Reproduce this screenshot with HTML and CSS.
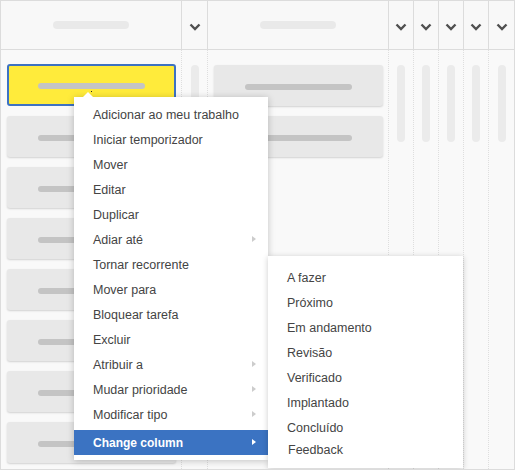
FILE: index.html
```html
<!DOCTYPE html>
<html>
<head>
<meta charset="utf-8">
<link rel="stylesheet" href="styles.css">
</head>
<body>
<div class="board">
  <div class="col">
    <div class="head"><span class="hbar"></span></div>
    <div class="body cards first">
      <div class="card active"><span class="bar"></span></div>
      <div class="card"><span class="bar"></span></div>
      <div class="card"><span class="bar"></span></div>
      <div class="card"><span class="bar"></span></div>
      <div class="card"><span class="bar"></span></div>
      <div class="card"><span class="bar"></span></div>
      <div class="card"><span class="bar"></span></div>
      <div class="card"><span class="bar"></span></div>
    </div>
  </div>
  <div class="col">
    <div class="head narrow"><svg class="chev" viewBox="0 0 12 8" width="12" height="8"><polyline points="1.5,1.5 6,6 10.5,1.5"/></svg></div>
    <div class="body lane"><span class="pill"></span></div>
  </div>
  <div class="col">
    <div class="head"><span class="hbar"></span></div>
    <div class="body cards third">
      <div class="card"><span class="bar"></span></div>
      <div class="card"><span class="bar"></span></div>
    </div>
  </div>
  <div class="col">
    <div class="head narrow"><svg class="chev" viewBox="0 0 12 8" width="12" height="8"><polyline points="1.5,1.5 6,6 10.5,1.5"/></svg></div>
    <div class="body lane"><span class="pill"></span></div>
  </div>
  <div class="col">
    <div class="head narrow"><svg class="chev" viewBox="0 0 12 8" width="12" height="8"><polyline points="1.5,1.5 6,6 10.5,1.5"/></svg></div>
    <div class="body lane"><span class="pill"></span></div>
  </div>
  <div class="col">
    <div class="head narrow"><svg class="chev" viewBox="0 0 12 8" width="12" height="8"><polyline points="1.5,1.5 6,6 10.5,1.5"/></svg></div>
    <div class="body lane"><span class="pill"></span></div>
  </div>
  <div class="col">
    <div class="head narrow"><svg class="chev" viewBox="0 0 12 8" width="12" height="8"><polyline points="1.5,1.5 6,6 10.5,1.5"/></svg></div>
    <div class="body lane"><span class="pill"></span></div>
  </div>
  <div class="col last">
    <div class="head narrow"><svg class="chev" viewBox="0 0 12 8" width="12" height="8"><polyline points="1.5,1.5 6,6 10.5,1.5"/></svg></div>
    <div class="body lane"><span class="pill"></span></div>
  </div>

  <span class="cursor-dot"></span>

  <ul class="menu">
    <li class="item">Adicionar ao meu trabalho</li>
    <li class="item">Iniciar temporizador</li>
    <li class="item">Mover</li>
    <li class="item">Editar</li>
    <li class="item">Duplicar</li>
    <li class="item sub">Adiar até</li>
    <li class="item">Tornar recorrente</li>
    <li class="item">Mover para</li>
    <li class="item">Bloquear tarefa</li>
    <li class="item">Excluir</li>
    <li class="item sub">Atribuir a</li>
    <li class="item sub">Mudar prioridade</li>
    <li class="item sub">Modificar tipo</li>
    <li class="item sub selected">Change column</li>
  </ul>

  <ul class="submenu">
    <li class="item">A fazer</li>
    <li class="item">Próximo</li>
    <li class="item">Em andamento</li>
    <li class="item">Revisão</li>
    <li class="item">Verificado</li>
    <li class="item">Implantado</li>
    <li class="item">Concluído</li>
    <li class="item feedback">Feedback</li>
  </ul>
</div>
</body>
</html>
```

FILE: styles.css
```css
html, body {
  margin: 0;
  padding: 0;
  background: #ffffff;
}

.board {
  position: relative;
  width: 515px;
  height: 470px;
  box-sizing: border-box;
  border: 1px solid #dcdcdc;
  background: #f9f9f9;
  display: grid;
  grid-template-columns: 181px 26px 181px 25px 25px 25px 25px 25px;
  overflow: hidden;
  font-family: "Liberation Sans", Arial, sans-serif;
}

.col {
  display: flex;
  flex-direction: column;
  min-height: 0;
}

.head {
  height: 49px;
  flex: none;
  box-sizing: border-box;
  border-right: 1px solid #dcdcdc;
  border-bottom: 1px solid #dcdcdc;
  background: #f8f8f8;
  display: flex;
  align-items: center;
  justify-content: center;
}

.head.narrow {
  padding-top: 3px;
}

.last .head {
  border-right: none;
}

.hbar {
  width: 76px;
  height: 8px;
  border-radius: 4px;
  background: #e9e9e9;
  margin-top: -1px;
}

.chev polyline {
  fill: none;
  stroke: #505050;
  stroke-width: 2.4;
  stroke-linecap: butt;
  stroke-linejoin: miter;
}

.body {
  flex: 1;
  box-sizing: border-box;
  border-right: 1px dotted #dedede;
  background: #f9f9f9;
}

.last .body {
  border-right: none;
}

.cards {
  display: flex;
  flex-direction: column;
  gap: 10px;
  padding: 14px 5px 0 6px;
}

.cards.third {
  padding-top: 15px;
}

.card {
  height: 41px;
  flex: none;
  box-sizing: border-box;
  background: #e8e8e8;
  border-radius: 3px;
  box-shadow: 0 1px 2px rgba(0, 0, 0, 0.16);
  display: flex;
  align-items: center;
  justify-content: center;
  padding-top: 3px;
}

.card.active {
  height: 42px;
  background: #ffeb3b;
  border: 2px solid #3d72c2;
  box-shadow: none;
  padding-top: 2px;
}

.bar {
  width: 107px;
  height: 6px;
  border-radius: 3px;
  background: #c4c4c4;
}

.lane {
  display: flex;
  justify-content: center;
  padding-top: 15px;
}

.pill {
  width: 8px;
  height: 77px;
  border-radius: 4px;
  background: #ebebeb;
}

.cursor-dot {
  position: absolute;
  left: 90px;
  top: 90px;
  width: 1px;
  height: 1px;
  background: #222;
}

.menu, .submenu {
  list-style: none;
  margin: 0;
  position: absolute;
  background: #ffffff;
  box-sizing: border-box;
  font-size: 12.5px;
  color: #444444;
}

.menu {
  left: 73px;
  top: 96px;
  width: 194px;
  padding: 5px 0 5px 0;
  box-shadow: 0 1px 7px rgba(0, 0, 0, 0.22);
}

.menu::before {
  content: "";
  position: absolute;
  top: -5px;
  left: 9px;
  border-left: 5px solid transparent;
  border-right: 5px solid transparent;
  border-bottom: 5px solid #ffffff;
}

.item {
  position: relative;
  height: 25px;
  line-height: 26px;
  padding-left: 19px;
  white-space: nowrap;
}

.item.sub::after {
  content: "";
  position: absolute;
  right: 12px;
  top: 9px;
  border-left: 4px solid #cccccc;
  border-top: 3.5px solid transparent;
  border-bottom: 3.5px solid transparent;
}

.item.selected {
  margin-top: 3px;
  background: #3b73c2;
  color: #ffffff;
  font-weight: bold;
  font-size: 12px;
}

.item.selected::after {
  border-left-color: #ffffff;
  top: 9px;
}

.submenu {
  left: 267px;
  top: 255px;
  width: 195px;
  height: 212px;
  padding: 9px 0 0 0;
  box-shadow: 0 1px 6px rgba(0, 0, 0, 0.2);
}

.item.feedback {
  margin-top: -3px;
  padding-left: 20px;
}
```
